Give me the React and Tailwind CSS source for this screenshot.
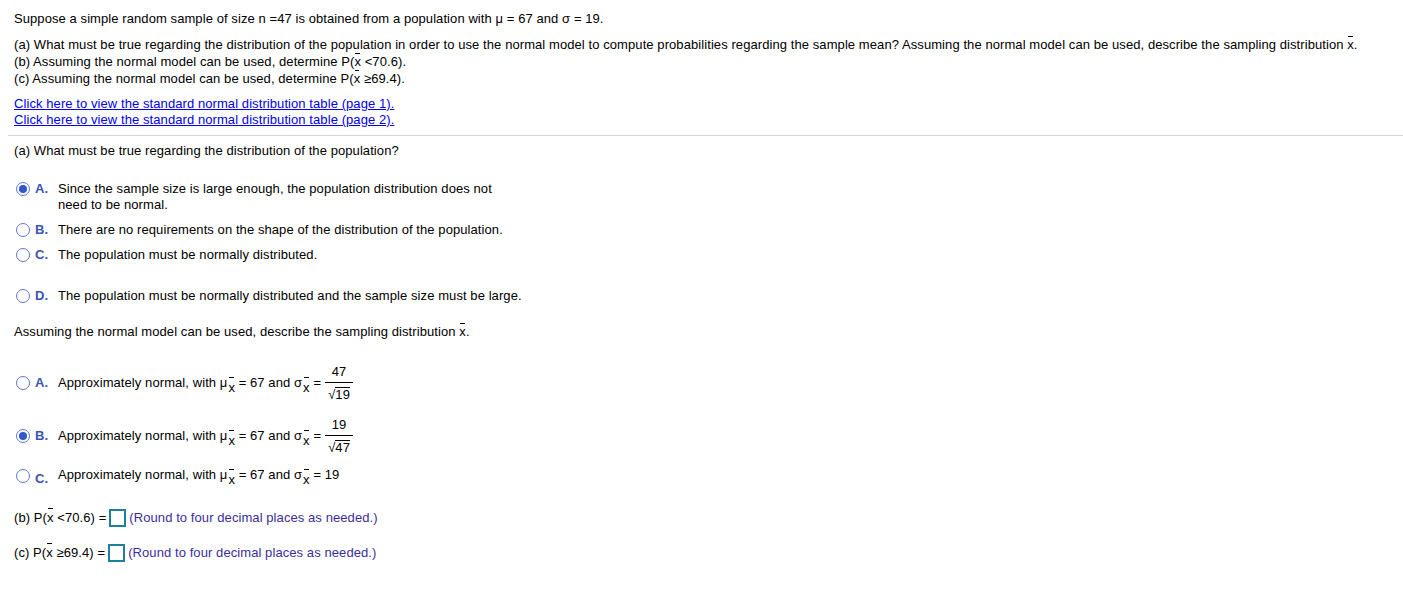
import React from "react";

const XBar = () => (
  <span className="relative inline-block">
    x
    <span className="absolute left-[1px] right-[1px] top-[0px] h-px bg-black" />
  </span>
);

const SubX = () => (
  <span className="relative inline-block top-[5px] ml-[1px]">
    x
    <span className="absolute left-[1px] right-[1px] top-[-1px] h-px bg-black" />
  </span>
);

const Radio = ({ checked }) => (
  <span className="inline-flex w-[14px] h-[14px] rounded-full border border-[#5b79d6] bg-white items-center justify-center shrink-0">
    {checked && <span className="w-[8px] h-[8px] rounded-full bg-[#3356c8]" />}
  </span>
);

const Option = ({ letter, checked, children, className = "" }) => (
  <div className={"flex items-start " + className}>
    <div className="flex items-center h-[16px] pl-[16px]">
      <Radio checked={checked} />
      <span className="ml-[5px] w-[23px] text-[#3a55b4] font-bold">{letter}</span>
    </div>
    <div className="leading-[16px]">{children}</div>
  </div>
);

const Frac = ({ num, den }) => (
  <span className="inline-flex flex-col items-center ml-[4px]">
    <span className="leading-[15px] mb-[3px]">{num}</span>
    <span className="w-[28px] h-px bg-black" />
    <span className="leading-[15px] mt-[4px] flex items-start">
      <span>√</span>
      <span className="border-t border-black leading-[14px]">{den}</span>
    </span>
  </span>
);

const Box = () => (
  <span className="inline-block w-[17px] h-[18px] border-2 border-[#1f7f9c] bg-white mx-[3px] align-middle" />
);

export default function App() {
  return (
    <div
      className="w-[1403px] h-[602px] bg-white text-black text-[13px] tracking-[0.08px]"
      style={{ fontFamily: '"Liberation Sans", Arial, sans-serif' }}
    >
      <div className="pt-[10px] pl-[14px] leading-[17px]">
        Suppose a simple random sample of size n =47 is obtained from a population with μ = 67 and σ = 19.
      </div>
      <div className="pl-[14px] mt-[9px] leading-[17px]">
        <div>
          (a) What must be true regarding the distribution of the population in order to use the normal model to compute probabilities regarding the sample mean? Assuming the normal model can be used, describe the sampling distribution <XBar />.
        </div>
        <div>
          (b) Assuming the normal model can be used, determine P(<XBar /> &lt;70.6).
        </div>
        <div>
          (c) Assuming the normal model can be used, determine P(<XBar /> ≥69.4).
        </div>
      </div>
      <div className="pl-[14px] mt-[9px] leading-[16px] text-[#0000ee]">
        <div className="underline">Click here to view the standard normal distribution table (page 1).</div>
        <div className="underline">Click here to view the standard normal distribution table (page 2).</div>
      </div>
      <div className="ml-[8px] mt-[7px] h-px bg-[#d4d4d8]" />
      <div className="pl-[14px] mt-[6px] leading-[17px]">
        (a) What must be true regarding the distribution of the population?
      </div>

      <Option letter="A." checked className="mt-[22px]">
        <div>Since the sample size is large enough, the population distribution does not</div>
        <div>need to be normal.</div>
      </Option>
      <Option letter="B." className="mt-[9px]">
        There are no requirements on the shape of the distribution of the population.
      </Option>
      <Option letter="C." className="mt-[9px]">
        The population must be normally distributed.
      </Option>
      <Option letter="D." className="mt-[25px]">
        The population must be normally distributed and the sample size must be large.
      </Option>

      <div className="pl-[14px] mt-[19px] leading-[17px]">
        Assuming the normal model can be used, describe the sampling distribution <XBar />.
      </div>

      <div className="flex items-center mt-[24px] pl-[16px]">
        <Radio />
        <span className="ml-[5px] w-[23px] text-[#3a55b4] font-bold">A.</span>
        <span>Approximately normal, with μ<SubX /> = 67 and σ<SubX /> =</span>
        <Frac num="47" den="19" />
      </div>
      <div className="flex items-center mt-[15px] pl-[16px]">
        <Radio checked />
        <span className="ml-[5px] w-[23px] text-[#3a55b4] font-bold">B.</span>
        <span>Approximately normal, with μ<SubX /> = 67 and σ<SubX /> =</span>
        <Frac num="19" den="47" />
      </div>
      <div className="flex items-center mt-[12px] pl-[16px] h-[18px]">
        <Radio />
        <span className="ml-[5px] w-[23px] text-[#3a55b4] font-bold relative top-[3px]">C.</span>
        <span className="relative top-[-1px]">Approximately normal, with μ<SubX /> = 67 and σ<SubX /> = 19</span>
      </div>

      <div className="pl-[14px] mt-[23px] flex items-center h-[20px]">
        <span>(b) P(<XBar /> &lt;70.6) =</span>
        <Box />
        <span className="text-[#3b2e9c]">(Round to four decimal places as needed.)</span>
      </div>
      <div className="pl-[14px] mt-[15px] flex items-center h-[20px]">
        <span>(c) P(<XBar /> ≥69.4) =</span>
        <Box />
        <span className="text-[#3b2e9c]">(Round to four decimal places as needed.)</span>
      </div>
    </div>
  );
}
